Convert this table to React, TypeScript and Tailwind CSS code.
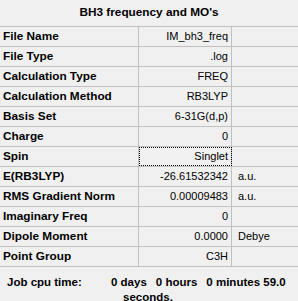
import React from 'react';

const rows = [
  { label: 'File Name', value: 'IM_bh3_freq', unit: '' },
  { label: 'File Type', value: '.log', unit: '' },
  { label: 'Calculation Type', value: 'FREQ', unit: '' },
  { label: 'Calculation Method', value: 'RB3LYP', unit: '' },
  { label: 'Basis Set', value: '6-31G(d,p)', unit: '' },
  { label: 'Charge', value: '0', unit: '' },
  { label: 'Spin', value: 'Singlet', unit: '', focused: true },
  { label: 'E(RB3LYP)', value: '-26.61532342', unit: 'a.u.' },
  { label: 'RMS Gradient Norm', value: '0.00009483', unit: 'a.u.' },
  { label: 'Imaginary Freq', value: '0', unit: '' },
  { label: 'Dipole Moment', value: '0.0000', unit: 'Debye' },
  { label: 'Point Group', value: 'C3H', unit: '' },
];

export default function App() {
  return (
    <div
      className="w-[298px] h-[301px] overflow-hidden bg-[#f0f0f0] text-black text-[11px] leading-[19px]"
      style={{ fontFamily: 'Tahoma, "Liberation Sans", Arial, sans-serif' }}
    >
      <div className="h-[26px] flex items-center justify-center font-bold text-[11.8px] pb-[1px]">
        BH3 frequency and MO's
      </div>

      <div className="border-t border-[#c0c0c0]">
        {rows.map((r) => (
          <div key={r.label} className="flex h-[20px] border-b border-[#c0c0c0]">
            <div className="w-[139px] border-r border-[#c0c0c0] pl-[3px] font-bold text-[11.8px]">
              {r.label}
            </div>
            <div
              className={`w-[93px] border-r border-[#c0c0c0] pr-[3px] text-right ${
                r.focused ? 'outline-1 outline-dotted outline-black -outline-offset-1' : ''
              }`}
            >
              {r.value}
            </div>
            <div className="flex-1 pl-[6px]">{r.unit}</div>
          </div>
        ))}
      </div>

      {/* cpu time footer, second line runs off the bottom edge */}
      <div className="flex pt-[8px] pl-[7px] font-bold text-[11.5px] leading-[15px]">
        <div className="w-[104px] shrink-0">Job cpu time:</div>
        <div>
          <div className="flex gap-[9px] whitespace-nowrap">
            <span>0 days</span>
            <span>0 hours</span>
            <span>0 minutes 59.0</span>
          </div>
          <div className="pl-[12px]">seconds.</div>
        </div>
      </div>
    </div>
  );
}
